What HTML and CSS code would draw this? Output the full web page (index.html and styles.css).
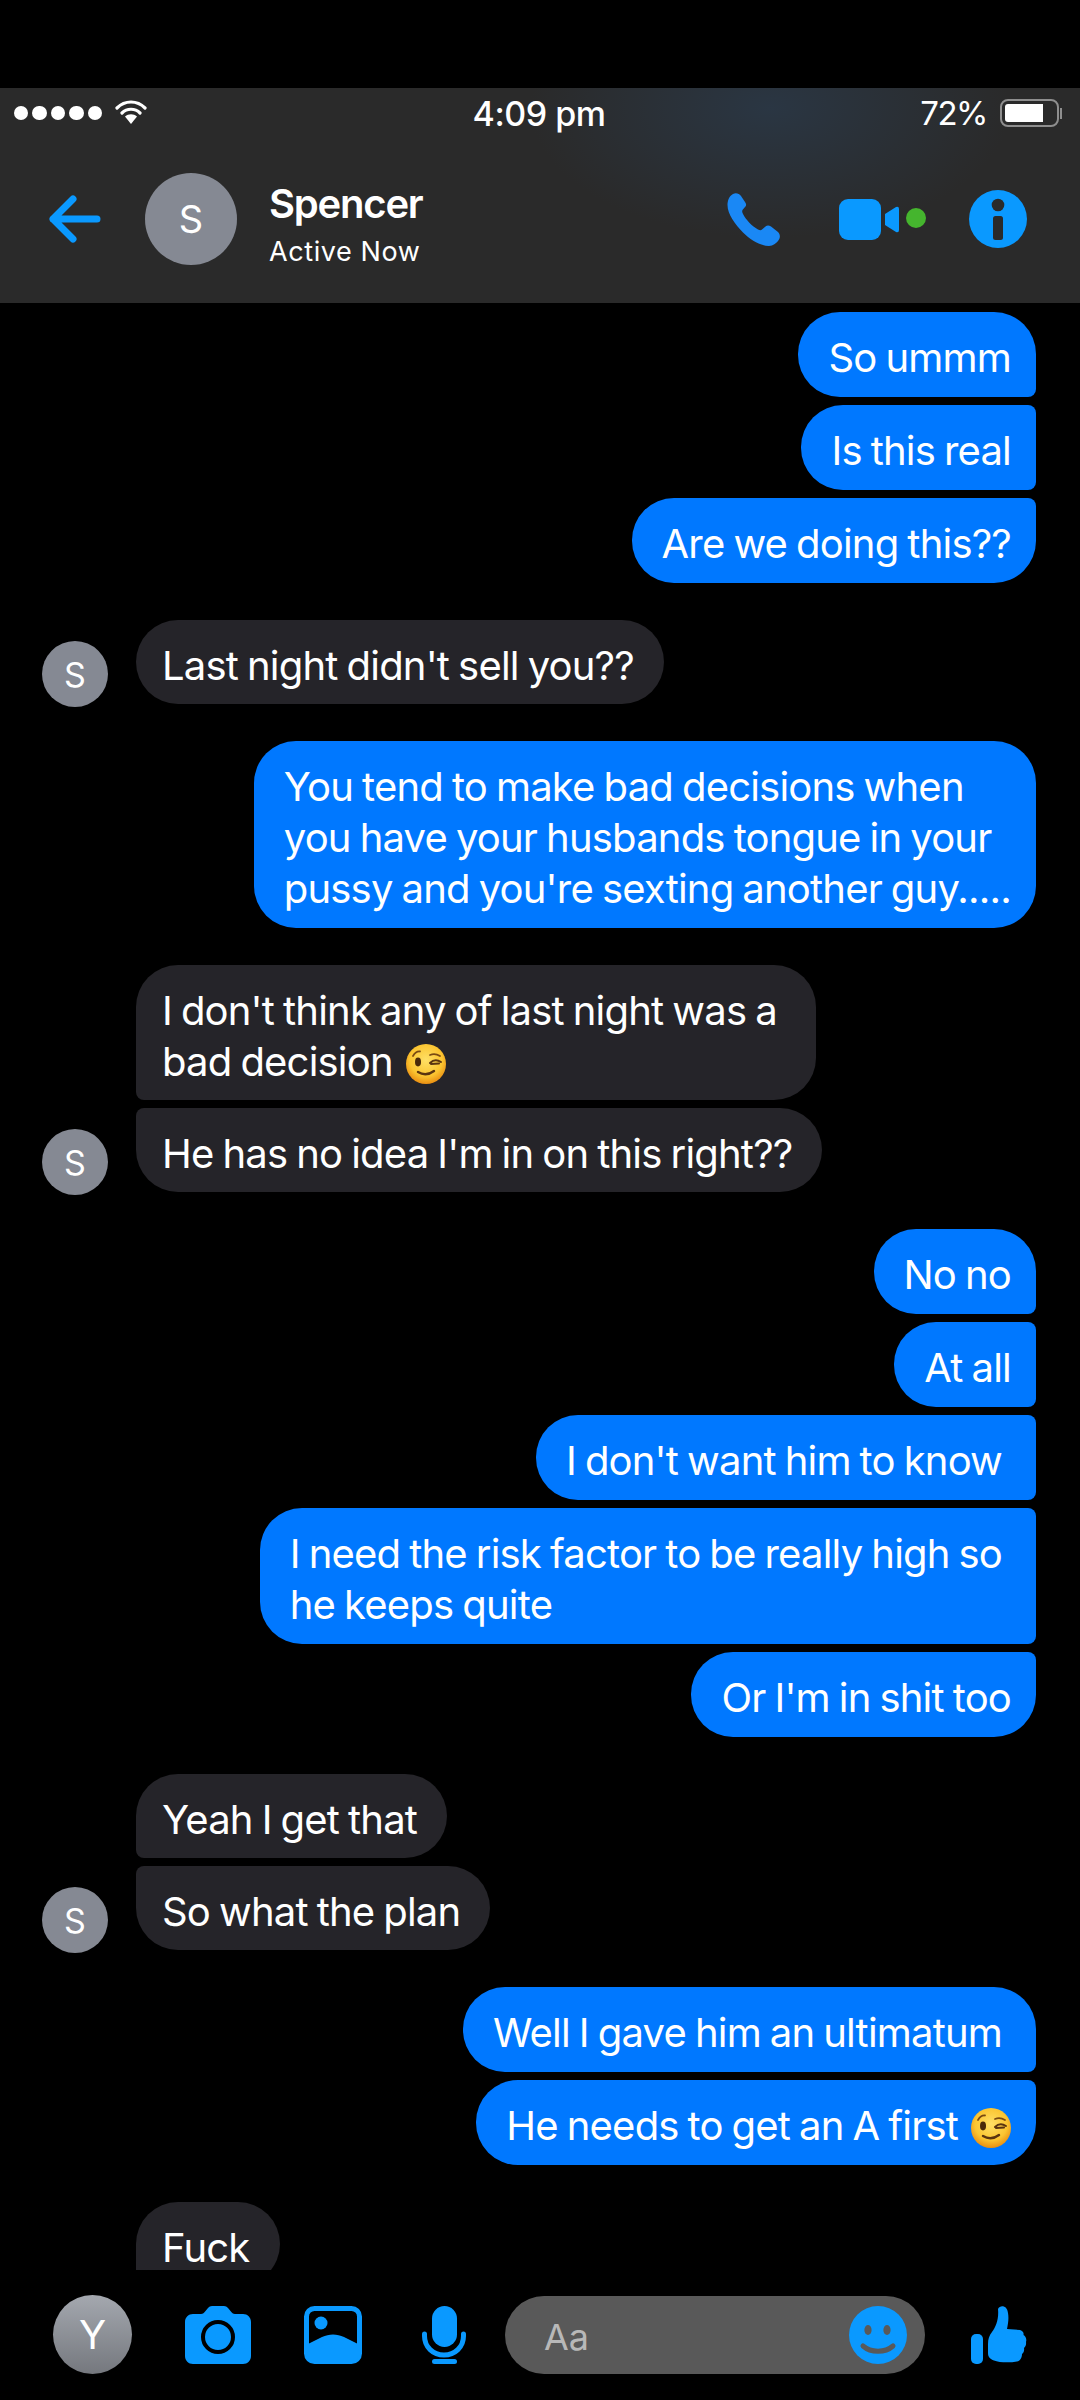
FILE: index.html
```html
<!DOCTYPE html>
<html lang="en">
<head>
<meta charset="utf-8">
<title>Spencer</title>
<link rel="stylesheet" href="styles.css">
</head>
<body>
<svg class="defs" width="0" height="0" aria-hidden="true">
  <defs>
    <radialGradient id="face" cx="50%" cy="40%" r="62%">
      <stop offset="0" stop-color="#ffe066"/>
      <stop offset="0.65" stop-color="#fbc531"/>
      <stop offset="1" stop-color="#e8890f"/>
    </radialGradient>
    <symbol id="wink" viewBox="0 0 40 40">
      <circle cx="20" cy="20" r="20" fill="url(#face)"/>
      <path d="M7 12 Q10 7 14 7.5M24 11 Q29 9 34 12" fill="none" stroke="#7a4a12" stroke-width="1.8" stroke-linecap="round"/>
      <ellipse cx="12" cy="18" rx="3" ry="4.4" fill="#4a2a0a"/>
      <path d="M24 19 Q29 14 35 18M25 20 L33 19.5" fill="none" stroke="#5a3410" stroke-width="2" stroke-linecap="round"/>
      <path d="M12 28 Q20 33 28 27" fill="none" stroke="#5a3410" stroke-width="2.4" stroke-linecap="round"/>
    </symbol>
  </defs>
</svg>
<div class="top-gap"></div>
<header class="head">
  <div class="status">
    <div class="status-left">
      <span class="signal"><i></i><i></i><i></i><i></i><i></i></span>
      <svg class="wifi" viewBox="0 0 32 24"><path d="M2 8 C10 0 22 0 30 8M7 13 C12 8 20 8 25 13" fill="none" stroke="#fff" stroke-width="3.2" stroke-linecap="round"/><path d="M10 16.5 C13.500 13.500 18.500 13.500 22 16.500 L16 24 Z" fill="#fff"/></svg>
    </div>
    <div class="clock">4:09 pm</div>
    <div class="status-right">
      <span class="pct">72%</span>
      <span class="battery"><span class="charge"></span></span>
      <span class="nub"></span>
    </div>
  </div>
  <div class="nav">
    <svg class="back" viewBox="0 0 53 48"><path d="M5 24 H49 M25 4 L5 24 L25 44" fill="none" stroke="#0a99ff" stroke-width="7" stroke-linecap="round" stroke-linejoin="round"/></svg>
    <div class="avatar avatar-lg">S</div>
    <div class="who">
      <div class="name">Spencer</div>
      <div class="active">Active Now</div>
    </div>
    <svg class="ic-phone" viewBox="0 0 53 53"><path fill="#1a88f5" d="M6 1 C9 -0.500 12 0.500 14 3 L18 9 C19.500 11 19.500 12.500 18 14 L15.500 17 C15 18 15 19 16 21 C19 27 25 33 31 36.500 C33 37.500 34 37.500 35 36.500 L38.500 33.500 C40 32 42 32 44 33.500 L51 39 C53 41 53.500 44 52 46.500 C50 50 46 53 42 53 C34 53 24 47.500 16 39.500 C8 31 0.500 21 0.500 12 C0.500 8 2 3 6 1 Z"/></svg>
    <svg class="ic-video" viewBox="0 0 88 42"><rect x="0" y="1" width="42" height="41" rx="9" fill="#0a99ff"/><path d="M46 16 L57 9 Q60 8 60 11 L60 32 Q60 35 57 34 L46 27 Z" fill="#0a99ff"/><circle cx="77" cy="20" r="10" fill="#45b52e"/></svg>
    <svg class="ic-info" viewBox="0 0 58 58"><circle cx="29" cy="29" r="29" fill="#0a99ff"/><circle cx="29" cy="15" r="6.300" fill="#2a2a2a"/><rect x="24" y="26" width="10" height="24" rx="2.500" fill="#2a2a2a"/></svg>
  </div>
</header>

<main class="thread">
  <section class="group me">
    <div class="bubble first">So ummm</div>
    <div class="bubble mid">Is this real</div>
    <div class="bubble last">Are we doing this??</div>
  </section>

  <section class="group them">
    <div class="avatar avatar-sm">S</div>
    <div class="stack">
      <div class="bubble solo">Last night didn't sell you??</div>
    </div>
  </section>

  <section class="group me">
    <div class="bubble solo">You tend to make bad decisions when<br>you have your husbands tongue in your<br>pussy and you're sexting another guy.....</div>
  </section>

  <section class="group them">
    <div class="avatar avatar-sm">S</div>
    <div class="stack">
      <div class="bubble first">I don't think any of last night was a <br>bad decision <svg class="emoji"><use href="#wink"/></svg></div>
      <div class="bubble last">He has no idea I'm in on this right??</div>
    </div>
  </section>

  <section class="group me">
    <div class="bubble first">No no</div>
    <div class="bubble mid">At all</div>
    <div class="bubble mid">I don't want him to know </div>
    <div class="bubble mid">I need the risk factor to be really high so <br>he keeps quite</div>
    <div class="bubble last">Or I'm in shit too</div>
  </section>

  <section class="group them">
    <div class="avatar avatar-sm">S</div>
    <div class="stack">
      <div class="bubble first">Yeah I get that</div>
      <div class="bubble last">So what the plan</div>
    </div>
  </section>

  <section class="group me">
    <div class="bubble first">Well I gave him an ultimatum </div>
    <div class="bubble last">He needs to get an A first <svg class="emoji"><use href="#wink"/></svg></div>
  </section>

  <section class="group them">
    <div class="avatar avatar-sm avatar-none"></div>
    <div class="stack">
      <div class="bubble first">Fuck</div>
    </div>
  </section>
</main>

<footer class="composer">
  <div class="avatar avatar-me">Y</div>
  <svg class="ic-camera" viewBox="0 0 66 58"><path fill="#0a99ff" d="M8 8 H16 C18 8 19 7 20.500 5 L23 2 C24 0.700 25.500 0 27 0 H39 C40.500 0 42 0.700 43 2 L45.500 5 C47 7 48 8 50 8 H58 C62.500 8 66 11.500 66 16 V50 C66 54.500 62.500 58 58 58 H8 C3.500 58 0 54.500 0 50 V16 C0 11.500 3.500 8 8 8 Z"/><circle cx="33" cy="31" r="15" fill="#0a99ff" stroke="#000" stroke-width="4"/></svg>
  <svg class="ic-photo" viewBox="0 0 58 58"><rect x="2.500" y="2.500" width="53" height="53" rx="8" fill="#000" stroke="#0a99ff" stroke-width="5"/><circle cx="17" cy="17" r="6.500" fill="#0a99ff"/><path fill="#0a99ff" d="M4 38 L18 31 C25 27.500 33 27.500 40 31 L54 38 V50 C54 53 52 55 50 55 H8 C6 55 4 53 4 50 Z"/></svg>
  <svg class="ic-mic" viewBox="0 0 44 58"><rect x="10" y="0" width="25" height="41" rx="12.500" fill="#0a99ff"/><path d="M2.500 28 V30 C2.500 41 11 49 22 49 C33 49 41.500 41 41.500 30 V28" fill="none" stroke="#0a99ff" stroke-width="5" stroke-linecap="round"/><rect x="10" y="53" width="25" height="5" rx="2.500" fill="#0a99ff"/></svg>
  <div class="input">
    <span class="placeholder">Aa</span>
    <svg class="ic-smile" viewBox="0 0 58 58"><circle cx="29" cy="29" r="29" fill="#0a99ff"/><ellipse cx="19" cy="24" rx="3.600" ry="5" fill="#595959"/><ellipse cx="38" cy="24" rx="3.600" ry="5" fill="#595959"/><path d="M14 40 C22 47 36 47 44 40" fill="none" stroke="#595959" stroke-width="5" stroke-linecap="round"/></svg>
  </div>
  <svg class="ic-thumb" viewBox="0 0 56 58"><rect x="0" y="28" width="12" height="30" rx="5" fill="#0a99ff"/><path fill="#0a99ff" d="M27 3 C29 -1 36 -1 37 7 C38 13 37 18 36 23 L49 24 C52 25 53 27 52.500 29 C54.500 30 56 33 55 36 C55.500 39 54 41 53 42 C53.500 45 52.500 47 51 48 C51 52 49 55 46 55.500 C38 57 28 56.500 23 54.500 C19 53 17 51 17 47 V38 C17 33 18 30 21 26 C25 21 28 13 27 3 Z"/></svg>
</footer>
</body>
</html>
```

FILE: styles.css
```css
* { box-sizing: border-box; }

html, body {
  margin: 0;
  padding: 0;
  background: #000;
}

body {
  width: 1080px;
  height: 2400px;
  overflow: hidden;
  color: #fff;
  font-family: Inter, "Liberation Sans", sans-serif;
}

.defs { display: block; height: 0; }

.top-gap { height: 88px; }

.head {
  height: 215px;
  background: radial-gradient(ellipse 240px 130px at 770px 20px, #2a3643 0%, #2a2a2a 100%);
}

.status {
  display: grid;
  grid-template-columns: 1fr auto 1fr;
  align-items: center;
  height: 50px;
  padding: 0 18px 0 14px;
}

.status-left { display: flex; align-items: center; gap: 13px; }

.signal { display: flex; gap: 4px; }

.signal i {
  display: block;
  width: 14.4px;
  height: 14.4px;
  border-radius: 50%;
  background: #fff;
}

.wifi { width: 32px; height: 24px; margin-top: -2px; }

.clock {
  font-size: 34px;
  font-weight: 500;
  letter-spacing: -0.5px;
  padding-left: 2px;
}

.status-right {
  display: flex;
  align-items: center;
  justify-content: flex-end;
}

.pct {
  font-size: 33px;
  font-weight: 400;
  letter-spacing: -1.5px;
  margin-right: 13px;
}

.battery {
  display: block;
  width: 59px;
  height: 28px;
  padding: 3px;
  border: 2px solid #8e8e8e;
  border-radius: 8px;
}

.charge {
  display: block;
  width: 38px;
  height: 100%;
  background: #fff;
  border-radius: 3px 0 0 3px;
}

.nub {
  display: block;
  width: 2px;
  height: 11px;
  margin-left: 1px;
  background: #8e8e8e;
}

.nav {
  display: flex;
  align-items: center;
  height: 165px;
  padding: 0 0 3px 48px;
}

.back { width: 53px; height: 48px; flex: none; }

.avatar {
  display: flex;
  align-items: center;
  justify-content: center;
  flex: none;
  border-radius: 50%;
  background: #858993;
  color: #fff;
  font-weight: 400;
}

.avatar-lg {
  width: 92px;
  height: 92px;
  margin-left: 44px;
  font-size: 38px;
}

.who {
  margin-left: 32px;
  width: 458px;
  padding-top: 12px;
}

.name {
  font-size: 40px;
  font-weight: 600;
  line-height: 46px;
  letter-spacing: -1.2px;
}

.active {
  font-size: 27px;
  line-height: 34px;
  margin-top: 8px;
  letter-spacing: 0.6px;
}

.ic-phone { width: 53px; height: 53px; flex: none; }
.ic-video { width: 88px; height: 42px; flex: none; margin-left: 59px; }
.ic-info { width: 58px; height: 58px; flex: none; margin-left: 42px; }

.thread {
  display: flex;
  flex-direction: column;
  gap: 37px;
  height: 1967px;
  overflow: hidden;
  padding: 9px 44px 0 42px;
}

.group { display: flex; flex: none; gap: 8px; }

.me {
  flex-direction: column;
  align-items: flex-end;
}

.them {
  align-items: flex-end;
  gap: 28px;
}

.stack {
  display: flex;
  flex-direction: column;
  align-items: flex-start;
  gap: 8px;
}

.bubble {
  font-size: 40px;
  line-height: 51px;
  letter-spacing: -0.8px;
  word-spacing: -1.5px;
  white-space: pre;
}

.me .bubble {
  padding: 20px 25px 14px 30px;
  background: #0078ff;
}

.them .bubble {
  padding: 19.5px 30px 13.5px 26px;
  background: #252429;
}

.me .solo { border-radius: 42px; }
.me .first { border-radius: 42px 42px 8px 42px; }
.me .mid { border-radius: 42px 8px 8px 42px; }
.me .last { border-radius: 42px 8px 42px 42px; }

.them .solo { border-radius: 42px; }
.them .first { border-radius: 42px 42px 42px 8px; }
.them .last { border-radius: 8px 42px 42px 42px; }

.avatar-sm {
  width: 66px;
  height: 66px;
  margin-bottom: -3px;
  font-size: 34px;
}

.avatar-none { visibility: hidden; }

.emoji {
  width: 40px;
  height: 40px;
  margin-left: 4px;
  vertical-align: -8px;
}

.composer {
  display: flex;
  align-items: flex-start;
  height: 130px;
  padding: 25px 0 0 53px;
}

.avatar-me {
  width: 79px;
  height: 79px;
  font-size: 40px;
  background: linear-gradient(#a4a8af, #75787e);
}

.ic-camera { width: 66px; height: 58px; flex: none; margin: 11px 0 0 53px; }
.ic-photo { width: 58px; height: 58px; flex: none; margin: 11px 0 0 53px; }
.ic-mic { width: 44px; height: 58px; flex: none; margin: 11px 0 0 60px; }

.input {
  display: flex;
  align-items: center;
  justify-content: space-between;
  flex: none;
  width: 420px;
  height: 78px;
  margin: 1px 0 0 39px;
  padding: 0 18px 0 39px;
  border-radius: 39px;
  background: #595959;
}

.placeholder {
  font-size: 36px;
  color: #b8b8b8;
  padding-top: 4px;
}

.ic-smile { width: 58px; height: 58px; flex: none; }
.ic-thumb { width: 56px; height: 58px; flex: none; margin: 11px 0 0 46px; }
```
